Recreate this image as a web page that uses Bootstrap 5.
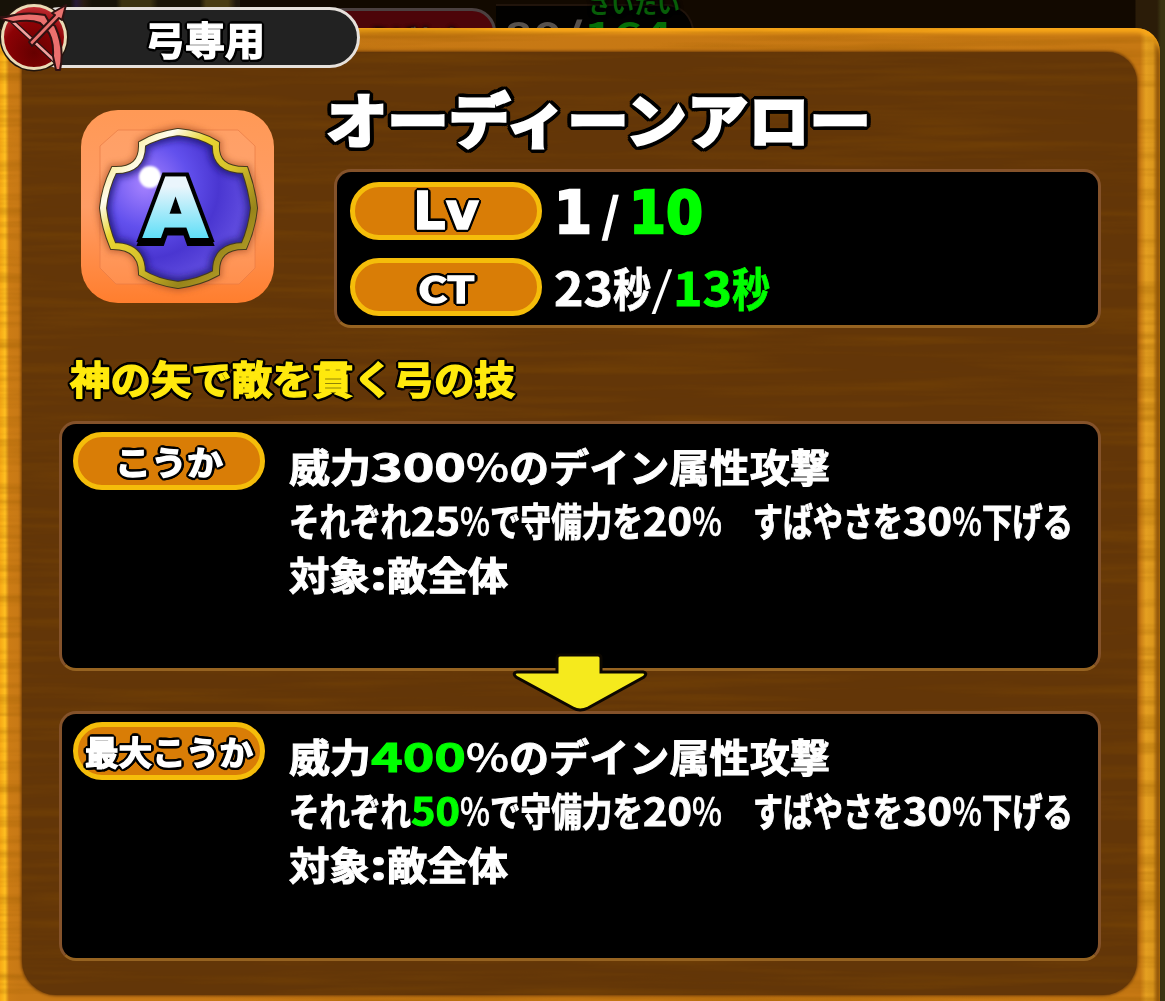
<!DOCTYPE html>
<html lang="ja">
<head>
    <meta charset="UTF-8">
    <meta name="viewport" content="width=device-width, initial-scale=1.0">
    <title>オーディーンアロー</title>
    <link href="https://cdn.jsdelivr.net/npm/bootstrap@5.3.0/dist/css/bootstrap.min.css" rel="stylesheet">

    <style>
        body {
            height: 1001px;
            background: linear-gradient(90deg, #120900 0 1135px, #2b1c08 1136px 1157px, #3b3512 1161px);
            color: #fff;
            font-family: "Noto Sans CJK JP", sans-serif;
            font-weight: 700;
            line-height: 1;
        }

        .fit {
            display: inline-block;
            white-space: pre;
            transform-origin: 0 50%;
            flex: none;
        }

        /* status bar behind the window */
        .back-bar {
            height: 28px;
        }

        .back-scene {
            width: 240px;
            height: 28px;
            background: linear-gradient(90deg, #171208 0 70px, #271a39 76px, #2a1c12 84px, #171208 92px 116px, #3c3310 122px 150px, #1c1606 158px 200px, #4a3d14 206px 228px, #20180b 236px);
        }

        .back-red {
            width: 256px;
            height: 60px;
            margin-top: 8px;
            padding: 14px 0 0 124px;
            background: #4d0509;
            border: 3px solid #4b4040;
            border-radius: 24px;
            color: #474040;
            font-size: 25px;
            text-shadow: 0 0 4px #000, 0 0 4px #000;
        }

        .back-count {
            width: 198px;
            height: 60px;
            margin-top: 4px;
            padding: 9px 0 0 8px;
            background: #020100;
            border: 2px solid #21140b;
            border-left: 0;
            border-radius: 0 28px 28px 0;
            color: #57514c;
            font-size: 38px;
        }

        .back-max {
            top: -8px;
            left: 588px;
            color: #075d08;
            font-size: 23px;
            text-shadow: 0 0 4px #000, 0 0 4px #000;
        }

        .dim-green { color: #066f08; }

        /* wooden window */
        .wood {
            width: 1160px;
            height: 993px;
            padding: 24px 23px 26px 22px;
            background: linear-gradient(90deg, #f5a916 0, #ffc021 5px, #cc7c15 9px, #c87915 20px, #c67813 1140px, #e5a021 1146px, #dc971d 1153px, #8a5009 1158px);
            border-radius: 4px 24px 0 0;
            box-shadow: inset 0 6px 4px -1px #f9a719;
        }

        .panel {
            height: 943px;
            padding: 43px 36px 0 37px;
            background: #633608;
            border-radius: 0 30px 34px 34px;
            box-shadow: 0 0 3px 1px #6e3c09;
        }

        .grain {
            inset: 0;
            width: 100%;
            height: 100%;
            border-radius: inherit;
            pointer-events: none;
        }

        .weapon-tag {
            top: 7px;
            left: 30px;
            width: 330px;
            height: 61px;
            background: #222;
            border: 3px solid #e6e1dc;
            border-radius: 31px;
            z-index: 3;
        }

        .weapon-tag .fit {
            margin: 9px 0 0 112px;
            font-size: 39px;
        }

        .weapon-icon {
            top: 0;
            left: 0;
            z-index: 4;
        }

        .outline {
            -webkit-text-stroke: 1.4px currentColor;
            text-shadow: 3px 0 #000, -3px 0 #000, 0 3px #000, 0 -3px #000, 2px 2px #000, -2px 2px #000, 2px -2px #000, -2px -2px #000, 3px 1px #000, -3px 1px #000, 1px 3px #000, -1px 3px #000, 3px -1px #000, -3px -1px #000, 1px -3px #000, -1px -3px #000;
        }

        .skill-head { height: 251px; }

        .skill-icon { margin: 15px 0 0 22px; }

        .skill-info { width: 767px; }

        .skill-name {
            height: 74px;
            margin: -7px 0 7px -8px;
            font-size: 59px;
            line-height: 60px;
            -webkit-text-stroke: 3px #fff;
            text-shadow: 5px 0 #000, -5px 0 #000, 0 5px #000, 0 -5px #000, 4px 3px #000, -4px 3px #000, 4px -3px #000, -4px -3px #000, 3px 4px #000, -3px 4px #000, 3px -4px #000, -3px -4px #000, 5px 2px #000, -5px 2px #000, 2px 5px #000, -2px 5px #000, 5px -2px #000, -5px -2px #000, 2px -5px #000, -2px -5px #000;
        }

        .box {
            background: #000;
            border: 3px solid #84522a;
            border-bottom-color: #966321;
            border-radius: 17px;
        }

        .stat-box {
            height: 159px;
            padding: 10px 13px;
        }

        .effect-box {
            height: 250px;
            padding: 8px 11px;
        }

        .pill {
            width: 192px;
            height: 58px;
            flex: none;
            background: #d97d06;
            border: 5px solid #f5bd0a;
            border-radius: 29px;
            font-size: 33px;
        }

        .stat-gap { height: 18px; }

        .lv-text {
            font: 900 52px/48px "DejaVu Sans", sans-serif;
        }

        .ct-text { font-size: 36px; }

        .stat-value {
            height: 58px;
            padding-left: 12px;
        }

        .lv-value {
            font: 700 58px/62px "DejaVu Sans", sans-serif;
            -webkit-text-stroke: 2.4px currentColor;
        }

        .slash {
            font-family: "Noto Sans CJK JP", sans-serif;
            font-size: 45px;
            -webkit-text-stroke-width: 1.5px;
        }

        .ct-value {
            font-size: 46px;
            line-height: 56px;
            -webkit-text-stroke: .8px currentColor;
        }

        .thin-slash {
            font-weight: 400;
            -webkit-text-stroke-width: 0;
        }

        .up { color: #0f0; }

        .caption {
            height: 59px;
            padding: 4px 0 0 11px;
            color: #ffe90d;
            font-size: 39px;
        }

        .effect-text {
            padding: 6px 0 0 24px;
            -webkit-text-stroke: 1px currentColor;
        }

        .line {
            height: 54px;
            font-size: 39px;
            line-height: 54px;
        }

        .percent {
            font-weight: 500;
            -webkit-text-stroke-width: .6px;
        }

        .gap-row { height: 40px; }

        .arrow {
            top: -19px;
            left: 452px;
            z-index: 2;
        }

        .badge-letter { filter: drop-shadow(0 4px 0 #000); }
    </style>
</head>
<body class="overflow-hidden position-relative m-0">

    <div class="back-bar d-flex">
        <div class="back-scene"></div>
        <div class="back-red">うばわた</div>
        <div class="back-count"><span class="fit" data-width="58">80</span><span class="fit" data-width="22">/</span><span class="fit dim-green" data-width="88">164</span></div>
        <div class="back-max position-absolute">さいたい</div>
    </div>

    <!-- Weapon restriction -->
    <div class="weapon-tag position-absolute">
        <span class="fit outline" data-width="120">弓専用</span>
    </div>
    <svg class="weapon-icon position-absolute" width="72" height="74" viewBox="0 0 72 74">
        <defs>
            <radialGradient id="red" cx=".5" cy=".75" r=".8">
                <stop offset="0" stop-color="#650000"/>
                <stop offset=".6" stop-color="#8c0205"/>
                <stop offset="1" stop-color="#d33b42"/>
            </radialGradient>
        </defs>
        <circle cx="34" cy="37" r="34.5" fill="#21150d"/>
        <circle cx="34" cy="37" r="31.5" fill="url(#red)" stroke="#eadbb6" stroke-width="3"/>
        <path d="M12 21 L57 63" stroke="#241010" stroke-width="5"/>
        <path d="M12 21 L57 63" stroke="#f3a19e" stroke-width="2.5"/>
        <path d="M1 17 L6 17 Q25 11 45 15 L49 22 L55 26 Q65 48 60 70 L56 70 L53 56 Q54 38 46 29 L40 23 Q30 19 13 22 L2 19 Z" fill="#eb706e" stroke="#301111" stroke-width="2" stroke-linejoin="round"/>
        <path d="M29 42 L55 15 L52 13 L66 5 L62 20 L59 18 L32 46 Z" fill="#e97370" stroke="#301111" stroke-width="2" stroke-linejoin="round"/>
    </svg>

    <div class="wood position-relative">
        <svg class="grain position-absolute" opacity=".6">
            <filter id="grain" x="0" y="0" width="100%" height="100%">
                <feTurbulence type="fractalNoise" baseFrequency=".004 .09" numOctaves="3" seed="8"/>
                <feColorMatrix values="0 0 0 0 .3  0 0 0 0 .1  0 0 0 0 0  1.6 0 0 0 -.68"/>
            </filter>
            <rect width="100%" height="100%" filter="url(#grain)"/>
        </svg>

        <div class="panel position-relative">
            <svg class="grain position-absolute start-0 top-0" opacity=".35">
                <rect width="100%" height="100%" filter="url(#grain)"/>
            </svg>

            <div class="position-relative">
                <div class="skill-head d-flex justify-content-between align-items-start">
                    <svg class="skill-icon" width="193" height="193" viewBox="0 0 193 193">
                        <defs>
                            <linearGradient id="tile" x2="0" y2="1">
                                <stop offset="0" stop-color="#ff9956"/>
                                <stop offset=".5" stop-color="#ff9d66"/>
                                <stop offset="1" stop-color="#ff7e2e"/>
                            </linearGradient>
                            <linearGradient id="gold" x2="1" y2="1">
                                <stop offset="0" stop-color="#f3d835"/>
                                <stop offset=".23" stop-color="#fffdf0"/>
                                <stop offset=".36" stop-color="#e9d632"/>
                                <stop offset=".55" stop-color="#d6c12b"/>
                                <stop offset=".75" stop-color="#98841a"/>
                                <stop offset="1" stop-color="#c7b030"/>
                            </linearGradient>
                            <radialGradient id="blue" cx=".28" cy=".34" r=".75">
                                <stop offset="0" stop-color="#a783ff"/>
                                <stop offset=".38" stop-color="#6250ed"/>
                                <stop offset=".65" stop-color="#4a36d1"/>
                                <stop offset="1" stop-color="#6854e4"/>
                            </radialGradient>
                            <linearGradient id="ice" x2="0" y2="1">
                                <stop offset=".25" stop-color="#eaf5fc"/>
                                <stop offset=".8" stop-color="#61dff7"/>
                            </linearGradient>
                            <filter id="soft"><feGaussianBlur stdDeviation="3"/></filter>
                            <filter id="spark"><feGaussianBlur stdDeviation="1.3"/></filter>
                            <path id="shield" d="M97 22 Q119 24 135 34 Q133 60 164 60 Q171 79 173 98 Q171 118 163 136 Q134 136 135 163 Q119 172 97 175 Q75 172 61 163 Q61 136 32 136 Q24 117 22 98 Q24 78 33 60 Q62 61 61 34 Q76 25 97 22Z"/>
                            <clipPath id="cut"><use href="#shield"/></clipPath>
                        </defs>
                        <rect width="193" height="193" rx="37" fill="url(#tile)"/>
                        <path d="M37 20 H157 L174 36 V158 L158 174 H35 L19 158 V36Z" fill="#ffb58a" fill-opacity=".25" stroke="#e87a45" stroke-opacity=".7"/>
                        <use href="#shield" fill="none" stroke="#a34c24" stroke-width="12" filter="url(#soft)" opacity=".6"/>
                        <use href="#shield" fill="url(#blue)"/>
                        <g clip-path="url(#cut)">
                            <use href="#shield" fill="none" stroke="#1e126f" stroke-width="15" filter="url(#soft)" opacity=".75"/>
                        </g>
                        <use href="#shield" fill="none" stroke="#463b1d" stroke-width="8"/>
                        <use href="#shield" fill="none" stroke="url(#gold)" stroke-width="6"/>
                        <circle cx="69" cy="67" r="11" fill="#fff" filter="url(#spark)"/>
                        <text class="badge-letter" x="63" y="127" textLength="63" lengthAdjust="spacingAndGlyphs" font-family="DejaVu Sans" font-size="80" font-weight="700" fill="url(#ice)" stroke="#000" stroke-width="11" paint-order="stroke">A</text>
                        <text x="63" y="127" textLength="63" lengthAdjust="spacingAndGlyphs" font-family="DejaVu Sans" font-size="80" font-weight="700" fill="url(#ice)" stroke="url(#ice)" stroke-width="3" aria-hidden="true">A</text>
                    </svg>

                    <div class="skill-info">
                        <div class="skill-name"><span class="fit" data-width="545">オーディーンアロー</span></div>
                        <div class="box stat-box">
                            <div class="d-flex">
                                <div class="pill d-flex justify-content-center align-items-center"><span class="fit outline lv-text" data-width="66">Lv</span></div>
                                <div class="stat-value lv-value d-flex"><span class="fit" data-width="38">1</span><span class="fit slash" data-width="37"> / </span><span class="fit up" data-width="74">10</span></div>
                            </div>
                            <div class="stat-gap"></div>
                            <div class="d-flex">
                                <div class="pill d-flex justify-content-center align-items-center"><span class="fit outline ct-text" data-width="57">CT</span></div>
                                <div class="stat-value ct-value d-flex"><span class="fit" data-width="59">23</span><span class="fit" data-width="38">秒</span><span class="fit thin-slash" data-width="22">/</span><span class="fit up" data-width="59">13</span><span class="fit up" data-width="38">秒</span></div>
                            </div>
                        </div>
                    </div>
                </div>

                <div class="caption d-flex align-items-center"><span class="fit outline" data-width="445">神の矢で敵を貫く弓の技</span></div>

                <!-- Effect at the current level -->
                <div class="box effect-box d-flex align-items-start mt-3">
                    <div class="pill d-flex justify-content-center align-items-center"><span class="fit outline" data-width="108">こうか</span></div>
                    <div class="effect-text">
                        <div class="line d-flex"><span class="fit" data-width="82">威力</span><span class="fit" data-width="95">300</span><span class="fit percent" data-width="43">%</span><span class="fit" data-width="321">のデイン属性攻撃</span></div>
                        <div class="line d-flex"><span class="fit" data-width="122">それぞれ</span><span class="fit" data-width="49">25</span><span class="fit percent" data-width="30">%</span><span class="fit" data-width="153">で守備力を</span><span class="fit" data-width="49">20</span><span class="fit percent" data-width="30">%</span><span class="fit" data-width="31">　</span><span class="fit" data-width="150">すばやさを</span><span class="fit" data-width="49">30</span><span class="fit percent" data-width="30">%</span><span class="fit" data-width="91">下げる</span></div>
                        <div class="line d-flex"><span class="fit" data-width="81">対象</span><span class="fit" data-width="17">:</span><span class="fit" data-width="121">敵全体</span></div>
                    </div>
                </div>

                <div class="gap-row position-relative">
                    <svg class="arrow position-absolute" width="140" height="60" viewBox="0 0 140 60">
                        <path d="M49 3 H87 Q90 3 90 6 V20 H132 Q137 21 133 25 L77 56 Q69 60 62 56 L5 25 Q1 21 6 20 H46 V6 Q46 3 49 3Z" fill="#f5ea1d" stroke="#0c0700" stroke-width="3"/>
                    </svg>
                </div>

                <!-- Effect at the maximum level -->
                <div class="box effect-box d-flex align-items-start">
                    <div class="pill d-flex justify-content-center align-items-center"><span class="fit outline" data-width="168">最大こうか</span></div>
                    <div class="effect-text">
                        <div class="line d-flex"><span class="fit" data-width="82">威力</span><span class="fit up" data-width="95">400</span><span class="fit percent" data-width="43">%</span><span class="fit" data-width="321">のデイン属性攻撃</span></div>
                        <div class="line d-flex"><span class="fit" data-width="122">それぞれ</span><span class="fit up" data-width="49">50</span><span class="fit percent" data-width="30">%</span><span class="fit" data-width="153">で守備力を</span><span class="fit" data-width="49">20</span><span class="fit percent" data-width="30">%</span><span class="fit" data-width="31">　</span><span class="fit" data-width="150">すばやさを</span><span class="fit" data-width="49">30</span><span class="fit percent" data-width="30">%</span><span class="fit" data-width="91">下げる</span></div>
                        <div class="line d-flex"><span class="fit" data-width="81">対象</span><span class="fit" data-width="17">:</span><span class="fit" data-width="121">敵全体</span></div>
                    </div>
                </div>
            </div>
        </div>
    </div>

    <script src="https://cdn.jsdelivr.net/npm/bootstrap@5.3.0/dist/js/bootstrap.bundle.min.js"></script>
    <script>
        // Stretch or squeeze each run of text to its column width
        document.querySelectorAll(".fit").forEach(el => {
            const width = Number(el.dataset.width);
            const scale = width / el.getBoundingClientRect().width;
            el.style.width = width + "px";
            el.style.transform = "scaleX(" + scale + ")";
        });
    </script>
</body>
</html>
